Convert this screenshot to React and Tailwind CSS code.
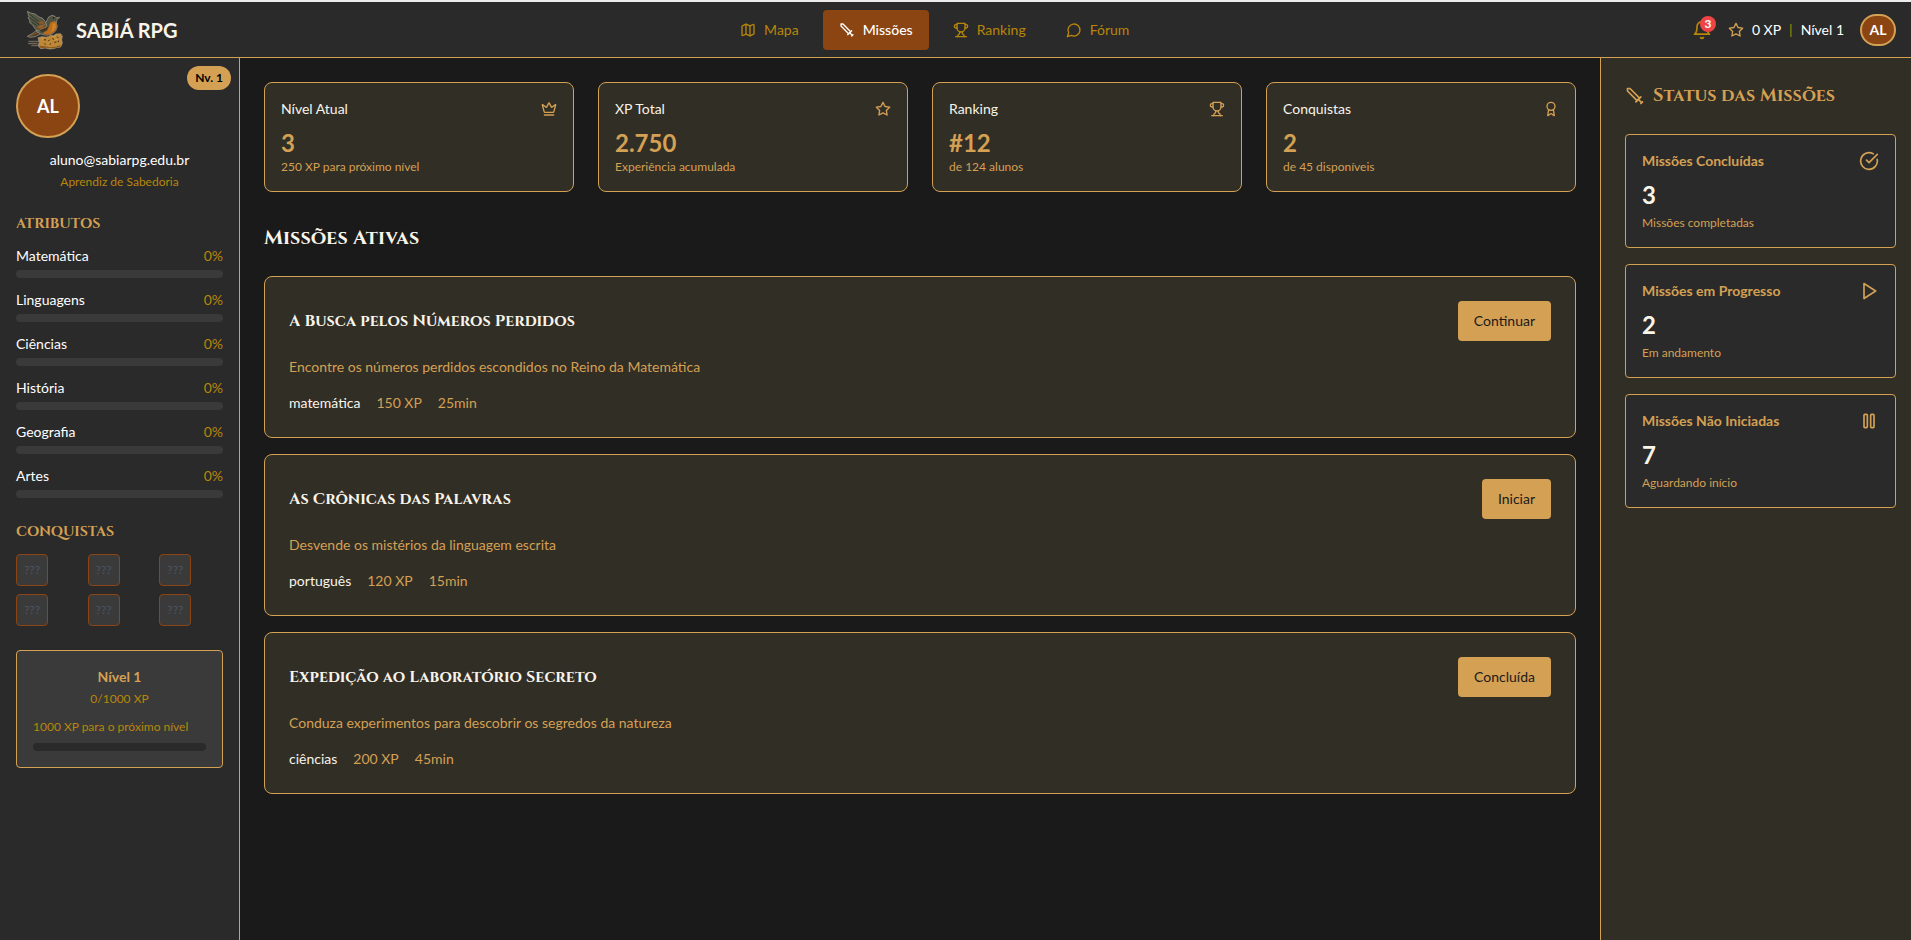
import React from "react";

function Icon({ size = "size-4", className = "", children }) {
  return (
    <svg
      viewBox="0 0 24 24"
      fill="none"
      stroke="currentColor"
      strokeWidth="2"
      strokeLinecap="round"
      strokeLinejoin="round"
      aria-hidden="true"
      className={`${size} shrink-0 ${className}`}
    >
      {children}
    </svg>
  );
}

const MapIcon = (p) => (
  <Icon {...p}>
    <path d="M14.106 5.553a2 2 0 0 0 1.788 0l3.659-1.83A1 1 0 0 1 21 4.619v12.764a1 1 0 0 1-.553.894l-4.553 2.277a2 2 0 0 1-1.788 0l-4.212-2.106a2 2 0 0 0-1.788 0l-3.659 1.83A1 1 0 0 1 3 19.381V6.618a1 1 0 0 1 .553-.894l4.553-2.277a2 2 0 0 1 1.788 0z" />
    <path d="M15 5.764v15" />
    <path d="M9 3.236v15" />
  </Icon>
);
const SwordIcon = (p) => (
  <Icon {...p}>
    <path d="M14.5 17.5 3 6V3h3l11.5 11.5" />
    <path d="m13 19 6-6" />
    <path d="m16 16 4 4" />
    <path d="m19 21 2-2" />
  </Icon>
);
const TrophyIcon = (p) => (
  <Icon {...p}>
    <path d="M6 9H4.5a2.5 2.5 0 0 1 0-5H6" />
    <path d="M18 9h1.5a2.5 2.5 0 0 0 0-5H18" />
    <path d="M4 22h16" />
    <path d="M10 14.66V17c0 .55-.47.98-.97 1.21C7.85 18.75 7 20.24 7 22" />
    <path d="M14 14.66V17c0 .55.47.98.97 1.21C16.15 18.75 17 20.24 17 22" />
    <path d="M18 2H6v7a6 6 0 0 0 12 0V2Z" />
  </Icon>
);
const ForumIcon = (p) => (
  <Icon {...p}>
    <path d="M7.9 20A9 9 0 1 0 4 16.1L2 22Z" />
  </Icon>
);
const BellIcon = (p) => (
  <Icon {...p}>
    <path d="M6 8a6 6 0 0 1 12 0c0 7 3 9 3 9H3s3-2 3-9" />
    <path d="M10.3 21a1.94 1.94 0 0 0 3.4 0" />
  </Icon>
);
const StarIcon = (p) => (
  <Icon {...p}>
    <polygon points="12 2 15.09 8.26 22 9.27 17 14.14 18.18 21.02 12 17.77 5.82 21.02 7 14.14 2 9.27 8.91 8.26 12 2" />
  </Icon>
);
const CrownIcon = (p) => (
  <Icon {...p}>
    <path d="M11.562 3.266a.5.5 0 0 1 .876 0L15.39 8.87a1 1 0 0 0 1.516.294L21.183 5.5a.5.5 0 0 1 .798.519l-2.834 10.246a1 1 0 0 1-.956.734H5.81a1 1 0 0 1-.957-.734L2.02 6.02a.5.5 0 0 1 .798-.519l4.276 3.664a1 1 0 0 0 1.516-.294z" />
    <path d="M5 21h14" />
  </Icon>
);
const AwardIcon = (p) => (
  <Icon {...p}>
    <path d="m15.477 12.89 1.515 8.526a.5.5 0 0 1-.81.47l-3.58-2.687a1 1 0 0 0-1.197 0l-3.586 2.686a.5.5 0 0 1-.81-.469l1.514-8.526" />
    <circle cx="12" cy="8" r="6" />
  </Icon>
);
const CheckIcon = (p) => (
  <Icon {...p}>
    <path d="M21.801 10A10 10 0 1 1 17 3.335" />
    <path d="m9 11 3 3L22 4" />
  </Icon>
);
const PlayIcon = (p) => (
  <Icon {...p}>
    <polygon points="6 3 20 12 6 21 6 3" />
  </Icon>
);
const PauseIcon = (p) => (
  <Icon {...p}>
    <rect x="14" y="4" width="4" height="16" rx="1" />
    <rect x="6" y="4" width="4" height="16" rx="1" />
  </Icon>
);

function Logo() {
  return (
    <svg viewBox="12 27 120 120" className="size-10 shrink-0" role="img" aria-label="Sabiá RPG">
      {/* rock */}
      <path d="M54 110 66 107 80 109 92 103 100 104 108 99 122 98 127 106 125 116 127 126 122 138 110 140 100 143 88 144 76 141 62 143 55 134 57 124Z" fill="#bd8838" stroke="#a39b8f" strokeWidth="2" strokeLinejoin="round" />
      <path d="M58 134 76 136 88 139 106 137 122 132 120 138 100 142 76 140 62 142Z" fill="#8a5a22" />
      <path d="M72 116l6 1M85 120l4-4M97 113l5 2M111 107l4 4M103 124l6-1M89 130l4-2M73 128l4 2M116 119l-2 5" stroke="#3c2713" strokeWidth="3" fill="none" />
      <path d="M98 108l10-4M104 118l8-4M64 113l6-2" stroke="#e0b05c" strokeWidth="2" fill="none" />
      <path d="M25 121h32M24 128h28M34 134h22" stroke="#a59d92" strokeWidth="2" fill="none" />
      <path d="M30 124h28M36 131h18" stroke="#5a4327" strokeWidth="2" fill="none" />
      {/* tail */}
      <path d="M52 86 38 97 22 106 30 109 46 107 62 98Z" fill="#4b4030" stroke="#a39b8f" strokeWidth="2" strokeLinejoin="round" />
      <path d="M28 106 58 92" stroke="#a06222" strokeWidth="2" />
      {/* body and head */}
      <path d="M48 90 58 74 78 64 86 48 96 43 105 46 109 50 119 49 111 56 109 66 112 76 107 90 96 99 80 103 62 99Z" fill="#4e5140" stroke="#a39b8f" strokeWidth="2" strokeLinejoin="round" />
      <path d="M92 64 106 59 111 75 106 89 95 98 80 101 68 97 82 88Z" fill="#b96c1c" />
      <path d="M98 68 106 66 108 78 102 88 92 95 96 82Z" fill="#d08224" />
      <path d="M108 50 119 49 111 55Z" fill="#75664f" />
      <circle cx="101" cy="51" r="2.4" fill="#15130f" />
      {/* wing */}
      <path d="M22 31 32 36 45 39 56 47 68 52 76 62 80 74 74 84 60 90 50 88 43 80 38 72 28 64 30 60 24 50 27 47Z" fill="#535643" stroke="#a39b8f" strokeWidth="2" strokeLinejoin="round" />
      <path d="M28 38 46 54 62 66M30 51 46 62 58 72M36 64 48 72 56 79" stroke="#2e3329" strokeWidth="2.5" fill="none" />
      <path d="M54 62 68 60 74 68 62 70ZM50 74 68 73 72 79 56 84Z" fill="#8f5822" />
      <path d="M58 88 74 80 86 76 80 88 66 94Z" fill="#3d3527" />
      <path d="M58 78 76 70M60 85 80 78" stroke="#c27828" strokeWidth="2" />
      <path d="M78 101v7M86 101v6" stroke="#7a5028" strokeWidth="2.5" />
    </svg>
  );
}

const navItems = [
  { label: "Mapa", icon: MapIcon },
  { label: "Missões", icon: SwordIcon, active: true },
  { label: "Ranking", icon: TrophyIcon },
  { label: "Fórum", icon: ForumIcon },
];

const attributes = ["Matemática", "Linguagens", "Ciências", "História", "Geografia", "Artes"];

const stats = [
  { title: "Nível Atual", value: "3", note: "250 XP para próximo nível", icon: CrownIcon },
  { title: "XP Total", value: "2.750", note: "Experiência acumulada", icon: StarIcon },
  { title: "Ranking", value: "#12", note: "de 124 alunos", icon: TrophyIcon },
  { title: "Conquistas", value: "2", note: "de 45 disponíveis", icon: AwardIcon },
];

const quests = [
  { title: "A Busca pelos Números Perdidos", text: "Encontre os números perdidos escondidos no Reino da Matemática", subject: "matemática", xp: "150 XP", time: "25min", action: "Continuar" },
  { title: "As Crônicas das Palavras", text: "Desvende os mistérios da linguagem escrita", subject: "português", xp: "120 XP", time: "15min", action: "Iniciar" },
  { title: "Expedição ao Laboratório Secreto", text: "Conduza experimentos para descobrir os segredos da natureza", subject: "ciências", xp: "200 XP", time: "45min", action: "Concluída" },
];

const statuses = [
  { title: "Missões Concluídas", value: "3", note: "Missões completadas", icon: CheckIcon },
  { title: "Missões em Progresso", value: "2", note: "Em andamento", icon: PlayIcon },
  { title: "Missões Não Iniciadas", value: "7", note: "Aguardando início", icon: PauseIcon },
];

function Header() {
  return (
    <header className="flex h-14 items-center justify-between border-b border-[#d4a054] bg-[#2a2a2a] pr-[15px] pl-6">
      <div className="flex items-center gap-3">
        <Logo />
        <span className="text-xl font-bold">SABIÁ RPG</span>
      </div>
      <nav className="flex gap-2">
        {navItems.map(({ label, icon: I, active }) => (
          <a
            key={label}
            href={`#${label}`}
            aria-current={active ? "page" : undefined}
            className={`flex h-10 items-center gap-2 rounded px-4 text-sm ${active ? "bg-[#8b4513] font-medium text-white" : "text-[#b8860b]"}`}
          >
            <I />
            {label}
          </a>
        ))}
      </nav>
      <div className="flex items-center gap-4">
        <button type="button" aria-label="Notificações" className="relative text-[#b8860b]">
          <BellIcon size="size-5" />
          <span className="absolute -top-1 -right-1 flex size-4 items-center justify-center rounded-full bg-[#ef4444] text-xs font-bold text-white">3</span>
        </button>
        <div className="flex items-center gap-2 text-sm text-white">
          <StarIcon className="text-[#d4a054]" />
          <span>0 XP</span>
          <span className="text-[#b8860b]">|</span>
          <span>Nível 1</span>
        </div>
        <button type="button" className="flex h-8 w-9 items-center justify-center rounded-full border-2 border-[#d4a054] bg-[#8b4513] text-sm font-bold text-white">
          AL
        </button>
      </div>
    </header>
  );
}

function Sidebar() {
  return (
    <aside className="relative flex w-60 shrink-0 flex-col gap-6 border-r border-[#d4a054] bg-[#2a2a2a] p-4">
      <span className="absolute top-2 right-2 rounded-full bg-[#d4a054] px-2 py-1 text-xs font-bold text-black">Nv. 1</span>
      <div>
        <div className="flex size-16 items-center justify-center rounded-full border-2 border-[#d4a054] bg-[#8b4513] text-lg font-bold text-white">AL</div>
        <p className="mt-3 text-center text-sm text-white">aluno@sabiarpg.edu.br</p>
        <p className="mt-1 text-center text-xs text-[#b8860b]">Aprendiz de Sabedoria</p>
      </div>

      <section>
        <h3 className="mb-3 font-[Cinzel,'Liberation_Serif',serif] text-sm font-bold text-[#d4a054] uppercase">Atributos</h3>
        <div className="flex flex-col gap-3">
          {attributes.map((name) => (
            <div key={name}>
              <div className="mb-1 flex justify-between text-sm">
                <span className="text-white">{name}</span>
                <span className="text-[#b8860b]">0%</span>
              </div>
              <div role="progressbar" aria-label={name} aria-valuenow={0} className="h-2 rounded-full bg-[#3a3a3a]" />
            </div>
          ))}
        </div>
      </section>

      <section>
        <h3 className="mb-3 font-[Cinzel,'Liberation_Serif',serif] text-sm font-bold text-[#d4a054] uppercase">Conquistas</h3>
        <div className="grid grid-cols-3 gap-2">
          {[1, 2, 3, 4, 5, 6].map((n) => (
            <div key={n} className="flex size-8 items-center justify-center rounded border border-[#8b4513] bg-[#3a3a3a] text-xs text-[#4b5563]">???</div>
          ))}
        </div>
      </section>

      <section className="rounded border border-[#d4a054] bg-[#3a3a3a] p-4">
        <p className="text-center text-sm font-bold text-[#d4a054]">Nível 1</p>
        <p className="mt-1 text-center text-xs text-[#b8860b]">0/1000 XP</p>
        <p className="mt-3 text-xs text-[#b8860b]">1000 XP para o próximo nível</p>
        <div role="progressbar" aria-label="Nível" aria-valuenow={0} className="mt-2 h-2 rounded-full bg-[#2a2a2a]" />
      </section>
    </aside>
  );
}

export default function App() {
  return (
    <div className="flex min-h-screen flex-col border-t-2 border-[#ececec] bg-[#1a1a1a] font-[Lato,sans-serif] text-[#f8f4e9]">
      <Header />
      <div className="flex flex-1">
        <Sidebar />
        <main className="min-w-0 flex-1 p-6">
          <div className="grid grid-cols-4 gap-6">
            {stats.map(({ title, value, note, icon: I }) => (
              <section key={title} className="rounded-lg border border-[#d4a054] bg-[#312e26] p-4">
                <div className="mb-2 flex items-center justify-between">
                  <h3 className="text-sm">{title}</h3>
                  <I className="text-[#d4a054]" />
                </div>
                <p className="text-2xl font-bold text-[#d4a054]">{value}</p>
                <p className="text-xs text-[#d4a054]">{note}</p>
              </section>
            ))}
          </div>

          <h2 className="mt-8 mb-6 font-[Cinzel,'Liberation_Serif',serif] text-xl leading-7 font-bold">Missões Ativas</h2>

          <div className="flex flex-col gap-4">
            {quests.map((q) => (
              <article key={q.title} className="rounded-lg border border-[#d4a054] bg-[#312e26] p-6">
                <div className="flex items-center justify-between">
                  <h3 className="font-[Cinzel,'Liberation_Serif',serif] text-base font-bold">{q.title}</h3>
                  <button type="button" className="h-10 rounded bg-[#d4a054] px-4 text-sm text-[#1a1a1a]">{q.action}</button>
                </div>
                <p className="mt-4 text-sm text-[#d4a054]">{q.text}</p>
                <div className="mt-4 flex gap-4 text-sm text-[#d4a054]">
                  <span className="text-[#f8f4e9]">{q.subject}</span>
                  <span>{q.xp}</span>
                  <span>{q.time}</span>
                </div>
              </article>
            ))}
          </div>
        </main>

        <aside className="w-[311px] shrink-0 border-l border-[#d4a054] bg-[#312e26] py-6 pr-[15px] pl-6">
          <h2 className="mb-6 flex items-center gap-2 font-[Cinzel,'Liberation_Serif',serif] text-lg leading-7 font-bold text-[#d4a054]">
            <SwordIcon size="size-5" />
            Status das Missões
          </h2>
          <div className="flex flex-col gap-4">
            {statuses.map(({ title, value, note, icon: I }) => (
              <section key={title} className="rounded border border-[#d4a054] bg-[#2a2a2a] p-4">
                <div className="mb-2 flex items-center justify-between text-[#d4a054]">
                  <h3 className="text-sm font-bold">{title}</h3>
                  <I size="size-5" />
                </div>
                <p className="text-2xl font-bold">{value}</p>
                <p className="mt-1 text-xs text-[#d4a054]">{note}</p>
              </section>
            ))}
          </div>
        </aside>
      </div>
    </div>
  );
}
